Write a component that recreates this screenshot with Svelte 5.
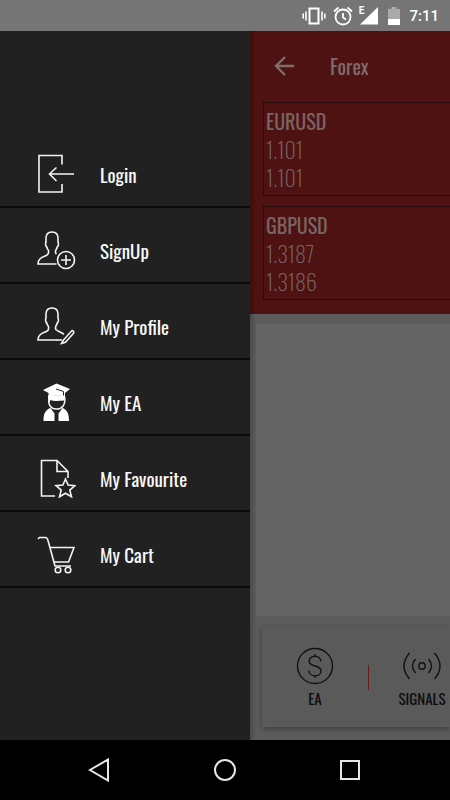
<script>
  const items = ['Login', 'SignUp', 'My Profile', 'My EA', 'My Favourite', 'My Cart'];
  const quotes = [
    { pair: 'EURUSD', bid: '1.101', ask: '1.101' },
    { pair: 'GBPUSD', bid: '1.3187', ask: '1.3186' }
  ];
</script>

<div class="screen">
  <header class="status">
    <svg width="24" height="20" viewBox="0 0 24 20" fill="none" stroke="#fff" stroke-width="2">
      <rect x="7.5" y="2.5" width="9" height="15" />
      <path d="M4 5.500v9M20 5.500v9M1.200 7.500v5M22.800 7.500v5" stroke-width="1.600" />
    </svg>
    <svg class="alarm" width="20" height="20" viewBox="0 0 20 20" fill="none" stroke="#fff" stroke-width="1.800">
      <circle cx="10" cy="11" r="7.500" />
      <path d="M1 5.500L5.500 1.500M19 5.500l-4.500-4M10 7v4.500l3 2" />
    </svg>
    <span class="edge">E</span>
    <svg width="18" height="20" viewBox="0 0 18 20"><path d="M0 18.500L18 1v17.500z" fill="#fff" /></svg>
    <svg class="battery" width="12" height="20" viewBox="0 0 12 20">
      <path d="M0 3h3.500V1h5v2H12v10H0z" fill="#aaa" /><path d="M0 13h12v6H0z" fill="#fff" />
    </svg>
    <time>7:11</time>
  </header>

  <div class="body">
    <nav class="drawer">
      {#each items as item, i}
        <a href="#{item.toLowerCase().replace(' ', '-')}">
          <svg width="40" height="40" viewBox="0 0 40 40" fill="none" stroke="#f4f4f4" stroke-width="1.600">
            {#if i === 0}
              <path d="M26 10.500V1.500H3V38h23v-8M38 20H14M20.500 13.500L13.500 20l7 7" />
            {:else if i === 1 || i === 2}
              <path d="M20.500 24c-1-.6-1.200-2-.8-3.600.7-1 1.200-2 1.500-3.400 1.400-.7 1.600-4 .7-5C22.600 5 21 2 16 2S9.400 5 10.100 12c-.9.500-.7 4.300.7 5 .3 1.600 1 2.700 1.700 3.600.4 2.400 0 4-2.300 5C6 27.400 2 28.500 2 34h18.500" />
              {#if i === 1}
                <circle cx="30" cy="30" r="8.500" /><path d="M25 30h10M30 25v10" />
              {:else}
                <path d="M20.500 24c2 1.800 5.500 2.500 7.500 4.500M20 34h6M27.500 34l8-9c1.200-1 3.200 1 2 2.300l-8 9-4 1.200z" />
              {/if}
            {:else if i === 3}
              <g fill="#fff" stroke="none">
                <path d="M7 8L20.500 1.500 34 7l-5 4v3.500c-4-1-12-1-16.500 0V11z" />
                <path d="M12 13.500h17v5c-5-.2-9 1.500-14.500-.5l-1 2.500-1.500-1z" />
                <path d="M14.500 26l4 5.500V39H7.500c0-7 1.500-11 7-13zM26.500 26l-4 5.500V39h10.500c0-7-1.500-11-6.500-13z" />
              </g>
              <path d="M13 16c-1.200 7 2 11 7.500 11S30 23 28.500 14.500" stroke-width="1.600" />
              <path d="M20 7l7.500 2.500v4" stroke="#212121" stroke-width="1" />
            {:else if i === 4}
              <path d="M19 38H5.500V2.500H21L32 13.500V20M21 2.500v11h11" />
              <path d="M29.500 21l2.600 6 6.900.6-5.200 4.500 1.700 6.700-6-3.600-6 3.600 1.700-6.700-5.200-4.500 6.900-.6z" />
            {:else}
              <path d="M2 5l1.500-1.500h6c1.500 0 2 1 2.500 3L19 32h16M14 13.500h24L32.500 28H18" />
              <circle cx="22" cy="36" r="2.800" /><circle cx="32" cy="36" r="2.800" />
            {/if}
          </svg>
          <span>{item}</span>
        </a>
      {/each}
    </nav>

    <main>
      <section class="market">
        <div class="bar">
          <button aria-label="Back">
            <svg width="22" height="22" viewBox="0 0 22 22" fill="none" stroke="#806c6c" stroke-width="2.400"><path d="M20 11H2M11 2L2 11l9 9" /></svg>
          </button>
          <h1>Forex</h1>
        </div>
        {#each quotes as q}
          <article>
            <h2>{q.pair}</h2>
            <p>{q.bid}</p>
            <p>{q.ask}</p>
          </article>
        {/each}
      </section>
      <section class="panel"></section>
      <footer>
        <button>
          <svg width="38" height="38" viewBox="0 0 38 38" fill="none" stroke="#111" stroke-width="1.400">
            <circle cx="19" cy="19" r="17.500" />
            <path d="M24.800 14.500c0-3-2.400-5.300-5.800-5.300s-5.800 2-5.800 5.100c0 6.200 11.800 3.200 11.800 9.400 0 3-2.600 5.200-6 5.200s-6-2.300-6-5.500M19 7v2.200M19 28.900v2.200" />
          </svg>
          <span>EA</span>
        </button>
        <i></i>
        <button>
          <svg width="38" height="38" viewBox="0 0 38 38" fill="none" stroke="#111" stroke-width="1.400">
            <circle cx="19" cy="19" r="3.200" />
            <path d="M12.500 12q-6 7 0 14M25.500 12q6 7 0 14M6.500 6q-11 13 0 26M31.500 6q11 13 0 26" />
          </svg>
          <span>SIGNALS</span>
        </button>
      </footer>
    </main>
  </div>

  <div class="keys">
    <button aria-label="Back"><svg width="24" height="24" viewBox="0 0 24 24"><path d="M20 1.500v21L2 12z" /></svg></button>
    <button aria-label="Home"><svg width="24" height="24" viewBox="0 0 24 24"><circle cx="12" cy="12" r="10" /></svg></button>
    <button aria-label="Recent apps"><svg width="24" height="24" viewBox="0 0 24 24"><rect x="3" y="3" width="18" height="18" /></svg></button>
  </div>
</div>

<style>
  * { box-sizing: border-box; margin: 0; }
  .screen {
    display: flex;
    flex-direction: column;
    min-height: 100vh;
    overflow: hidden;
    font-family: Oswald, "Liberation Sans Narrow", "Roboto Condensed", "Liberation Sans", sans-serif;
  }
  svg { display: block; flex: none; }
  button { padding: 0; border: 0; background: none; font: inherit; color: inherit; }
  .status {
    display: flex;
    align-items: center;
    justify-content: flex-end;
    height: 31px;
    padding-right: 11px;
    background: #757575;
    color: #fff;
    font-family: Roboto, sans-serif;
  }
  .alarm { margin-left: 7px; }
  .edge { align-self: flex-start; margin: 5px -4px 0 6px; font-size: 10px; line-height: 12px; font-weight: 700; }
  .battery { margin: 0 9px 0 10px; }
  time { font-size: 15px; font-weight: 500; }
  .body { display: flex; flex: 1; }
  .drawer { flex: none; width: 250px; padding-top: 101px; background: #212121; }
  .drawer a {
    display: flex;
    align-items: center;
    gap: 24px;
    height: 76px;
    padding: 10px 0 0 36px;
    border-bottom: 2px solid #0a0a0a;
    color: #f8f8f8;
    font-size: 19px;
    font-weight: 400;
    text-decoration: none;
  }
  main {
    display: flex;
    flex: 1;
    flex-direction: column;
    min-width: 0;
    overflow: hidden;
    background: linear-gradient(90deg, #4a4a4a, #5c5c5c 6px);
  }
  .market {
    padding: 0 0 14px 13px;
    background: linear-gradient(90deg, #3c0d0d, #4d1211 6px);
    color: #7b6464;
  }
  .bar { display: flex; align-items: center; gap: 34px; height: 71px; padding: 0 0 2px 11px; }
  h1 { font-size: 20px; font-weight: 400; color: #806c6c; }
  article { padding: 4px 0 4px 2px; border: 1px solid #290909; border-right: 0; }
  article + article { margin-top: 10px; }
  h2, p { line-height: 28px; font-size: 20px; }
  h2 { font-weight: 400; }
  p { font-size: 22px; font-weight: 200; }
  .panel { flex: 1; margin: 10px 0 11px 6px; border-radius: 4px 0 0 4px; background: #646464; }
  footer {
    display: flex;
    align-items: center;
    height: 100px;
    margin: 0 0 13px 12px;
    background: #5a5a5a;
    color: #0c0c0c;
    box-shadow: 0 2px 6px #0005;
  }
  footer button { display: flex; flex: none; flex-direction: column; align-items: center; gap: 3px; width: 106px; font-size: 15px; line-height: 20px; }
  footer i { flex: none; width: 1px; height: 25px; background: #6b1b1b; }
  .keys { display: flex; justify-content: space-around; align-items: center; height: 60px; padding: 0 37px; background: #000; }
  .keys svg { fill: none; stroke: #e6e6e6; stroke-width: 2; }
</style>
